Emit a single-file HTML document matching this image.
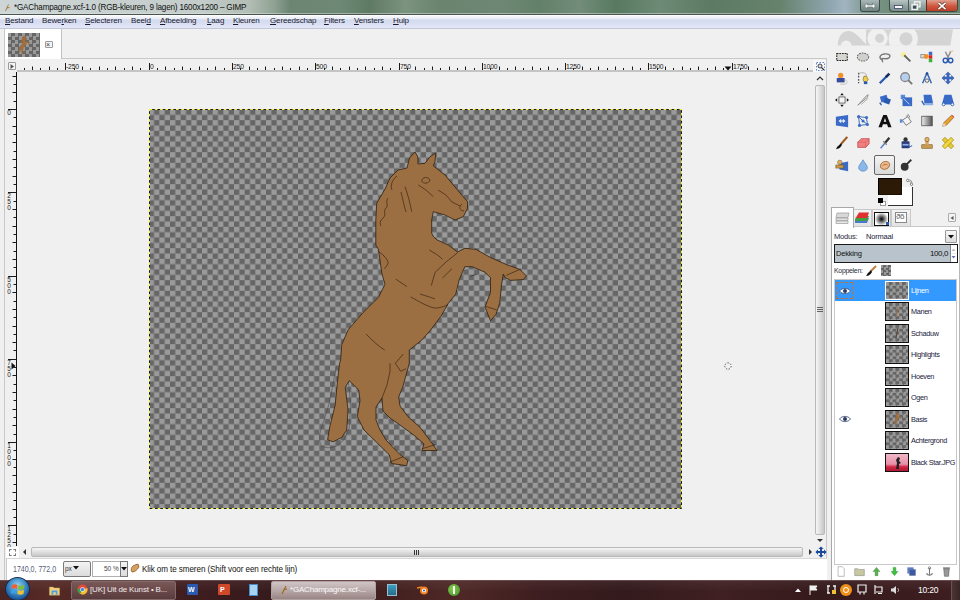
<!DOCTYPE html><html><head><meta charset="utf-8"><style>
*{margin:0;padding:0;box-sizing:border-box}
html,body{width:960px;height:600px;overflow:hidden;background:#f0f0f0;font-family:"Liberation Sans",sans-serif;font-size:8px;color:#000}
.a{position:absolute}
.t{position:absolute;white-space:nowrap;line-height:1}
#title{left:0;top:0;width:960px;height:15px;background:linear-gradient(90deg,#cdd5d6 0.0%,#c4cdca 20.8%,#b2bdb4 26.0%,#8ea192 28.6%,#6c8572 30.2%,#6d8874 35.4%,#5f7a64 38.5%,#7b937f 42.2%,#6a8470 45.8%,#6e8774 52.1%,#63806a 56.2%,#728c79 60.4%,#587a60 64.1%,#6d8a76 68.8%,#5d7a64 74.0%,#66826c 81.2%,#8fa6b0 86.5%,#a0b4c0 88.0%,#7a948a 90.6%,#6d8a72 93.8%,#6a866e 100.0%);border-bottom:1px solid #4a5550;box-shadow:inset 0 -1px 0 rgba(220,230,225,0.5)}
#menu{left:0;top:15px;width:960px;height:14px;background:linear-gradient(#fdfdfe 0,#fdfdfe 8%,#eef1f8 15%,#eef1f8 25%,#d4dbef 38%,#d8def1 60%,#e3e8f8 100%);border-bottom:1px solid #c4c8d6}
#menu .t{top:2px;font-size:8px;color:#1b1b30;letter-spacing:-0.15px}
svg{position:absolute;overflow:visible}
</style></head><body>
<div id="title" class="a">
<svg style="left:4px;top:3px" width="7" height="9" viewBox="0 0 7 9"><path d="M1.5 8 L4.5 1.5 M2.5 5 L5.5 4.5" stroke="#b07a40" stroke-width="1"/></svg>
<div class="t" style="left:14px;top:2.5px;font-size:9px;color:#101010;letter-spacing:-0.2px;transform:scaleX(0.9);transform-origin:0 0">*GAChampagne.xcf-1.0 (RGB-kleuren, 9 lagen) 1600x1200 – GIMP</div>
<div class="a" style="left:860px;top:0;width:20px;height:12px;border:1px solid #3c4a48;border-top:none;border-radius:0 0 3px 3px;background:linear-gradient(#a9b8b8,#8a9c9a 50%,#6f8381)"></div>
<svg style="left:864px;top:2px" width="12" height="8" viewBox="0 0 12 8"><path d="M0.5 4 L3.5 1 V3 H8.5 V1 L11.5 4 L8.5 7 V5 H3.5 V7 Z" fill="#f4f4f4" stroke="#4a5a5a" stroke-width="0.5"/></svg>
<div class="a" style="left:889px;top:0;width:69px;height:12px;border:1px solid #3c4a48;border-top:none;border-radius:0 0 4px 4px;overflow:hidden;background:linear-gradient(#b8c6c4,#93a5a2 50%,#7d908c)"><div class="a" style="left:18px;top:0;width:1px;height:12px;background:#4c5a58"></div><div class="a" style="left:36px;top:0;width:32px;height:12px;border-left:1px solid #5a2a20;background:linear-gradient(#e0a090,#d0573f 50%,#b83a22)"></div></div>
<svg style="left:894px;top:5px" width="10" height="5" viewBox="0 0 10 5"><rect x="0.5" y="0.5" width="8" height="3" fill="#f8f8f8" stroke="#3a4868" stroke-width="0.8"/></svg>
<svg style="left:911px;top:1px" width="10" height="10" viewBox="0 0 10 10"><rect x="3.5" y="0.8" width="5.5" height="5" fill="none" stroke="#f0f0f0" stroke-width="1.4"/><rect x="1" y="3.5" width="5.5" height="5" fill="#8a9e9a" stroke="#f0f0f0" stroke-width="1.4"/><rect x="2" y="5" width="3" height="2.5" fill="#3a4a5a"/></svg>
<svg style="left:937px;top:2px" width="10" height="8" viewBox="0 0 10 8"><path d="M1.5 0.8 L8.5 7.2 M8.5 0.8 L1.5 7.2" stroke="#3a1810" stroke-width="2.8"/><path d="M1.5 0.8 L8.5 7.2 M8.5 0.8 L1.5 7.2" stroke="#fff" stroke-width="1.8"/></svg>
</div>
<div id="menu" class="a">
<span class="t" style="left:5px"><u>B</u>estand</span>
<span class="t" style="left:42px">Bewe<u>r</u>ken</span>
<span class="t" style="left:85px"><u>S</u>electeren</span>
<span class="t" style="left:131px">Beel<u>d</u></span>
<span class="t" style="left:160px"><u>A</u>fbeelding</span>
<span class="t" style="left:207px"><u>L</u>aag</span>
<span class="t" style="left:233px"><u>K</u>leuren</span>
<span class="t" style="left:270px"><u>G</u>ereedschap</span>
<span class="t" style="left:324px"><u>F</u>ilters</span>
<span class="t" style="left:354px"><u>V</u>ensters</span>
<span class="t" style="left:393px"><u>H</u>ulp</span>
</div>
<div class="a" style="left:4px;top:29px;width:1px;height:551px;background:#c8c8c8"></div>
<div class="a" style="left:5px;top:29px;width:57px;height:30px;background:#fff;border-right:1px solid #c0c0c0"></div>
<div class="a" style="left:62px;top:58px;width:765px;height:1px;background:#c8c8c8"></div>
<div class="a" style="left:8px;top:33px;width:32px;height:24px;background-color:#9a9a9a;background-image:repeating-conic-gradient(#666 0 25%,transparent 0 50%);background-size:7px 7px"></div>
<svg style="left:8px;top:33px" width="32" height="24" viewBox="0 0 32 24"><path transform="scale(0.06) translate(-149,-109)" d="M415 152 L417.8 157 L418 164 L425 163.3 L430 156.7 L435.8 153 L435 161.7 L433.3 165.8 L445 175 L453.3 185 L461.7 195 L467.5 201.7 L467.5 208.3 L463.3 216.7 L455 220 L445 215 L433.3 211.7 L431.7 220 L431.7 233.3 L433.7 237 L437.3 240 L448.3 245 L457.5 252 L464.8 248.3 L475.8 249.3 L490.5 257.5 L507 264.8 L519.8 269.4 L526.3 275.8 L523.5 279.5 L510.7 280.4 L505.2 277.7 L503.3 274 L501.5 285 L499.7 303.3 L496 314.3 L490.5 320.8 L485 307 L490.5 292.3 L490.5 277.7 L485 272.2 L472.2 266.7 L464.8 266.7 L459.3 279.5 L455.7 294.2 L448.3 303.3 L441 316.2 L430 330.8 L421.8 340 L409.3 350 L409.3 363.3 L402.7 387.3 L398.7 396.7 L400 406 L408 416.7 L420 427.3 L432.7 444 L437 450.5 L421.8 450.5 L424 444 L415 436 L400 425 L390 418 L383 411 L382 398 L376 407 L376 420 L380 430 L386 440 L400.2 454.8 L407.8 460.3 L406.7 465.7 L391.5 463.5 L389.3 454.8 L364 430 L357.3 416.7 L360 400.7 L358.7 390 L349.3 380.7 L345.3 387.3 L348 410 L346.7 430 L341.7 437.5 L333 441.8 L327.6 439.7 L329.8 426.7 L335.2 405 L337.3 383.3 L339.5 363.8 L340.6 360 L341.7 344.8 L348.2 329.7 L363.3 312.3 L378.5 297.2 L385 284.2 L381.8 273.3 L378.5 249.5 L375.8 245 L375.8 220 L376.7 203.3 L385 189 L390 178 L398 170 L407 168 L409.5 158 Z" fill="#a06e3c"/></svg>
<div class="a" style="left:45px;top:41px;width:8px;height:7px;border:1px solid #9a9a9a;border-radius:1px;background:#f4f4f4"></div>
<div class="t" style="left:46px;top:41px;font-size:7px;color:#333">×</div>
<div class="a" style="left:826px;top:59px;width:1px;height:500px;background:#c8c8c8"></div>
<div class="a" style="left:5px;top:60px;width:808px;height:12px;background:#f0f0f0"></div>
<div class="a" style="left:17px;top:70px;width:796px;height:2px;background:#c4c4c4"></div>
<div class="a" style="left:16px;top:72px;width:1px;height:474px;background:#111"></div>
<div class="a" style="left:8px;top:62px;width:8px;height:8px;border:1px solid #9a9a9a;border-radius:1px;background:#f6f6f6"></div>
<svg style="left:10px;top:64px" width="5" height="5"><path d="M0.5 0 L4 2.5 L0.5 5 Z" fill="#555"/></svg>
<svg style="left:0;top:0" width="960" height="600"><path d="M24.5 68V70 M32.5 66.5V70 M40.5 68V70 M49.5 66.5V70 M57.5 68V70 M65.5 63V70 M74.5 68V70 M82.5 66.5V70 M90.5 68V70 M99.5 66.5V70 M107.5 68V70 M115.5 66.5V70 M124.5 68V70 M132.5 66.5V70 M140.5 68V70 M149.5 63V70 M157.5 68V70 M165.5 66.5V70 M174.5 68V70 M182.5 66.5V70 M190.5 68V70 M199.5 66.5V70 M207.5 68V70 M215.5 66.5V70 M224.5 68V70 M232.5 63V70 M240.5 68V70 M249.5 66.5V70 M257.5 68V70 M265.5 66.5V70 M274.5 68V70 M282.5 66.5V70 M290.5 68V70 M299.5 66.5V70 M307.5 68V70 M315.5 63V70 M324.5 68V70 M332.5 66.5V70 M340.5 68V70 M349.5 66.5V70 M357.5 68V70 M365.5 66.5V70 M374.5 68V70 M382.5 66.5V70 M390.5 68V70 M399.5 63V70 M407.5 68V70 M415.5 66.5V70 M424.5 68V70 M432.5 66.5V70 M440.5 68V70 M449.5 66.5V70 M457.5 68V70 M465.5 66.5V70 M474.5 68V70 M482.5 63V70 M490.5 68V70 M499.5 66.5V70 M507.5 68V70 M515.5 66.5V70 M523.5 68V70 M532.5 66.5V70 M540.5 68V70 M548.5 66.5V70 M557.5 68V70 M565.5 63V70 M573.5 68V70 M582.5 66.5V70 M590.5 68V70 M598.5 66.5V70 M607.5 68V70 M615.5 66.5V70 M623.5 68V70 M632.5 66.5V70 M640.5 68V70 M648.5 63V70 M657.5 68V70 M665.5 66.5V70 M673.5 68V70 M682.5 66.5V70 M690.5 68V70 M698.5 66.5V70 M707.5 68V70 M715.5 66.5V70 M723.5 68V70 M732.5 63V70 M740.5 68V70 M748.5 66.5V70 M757.5 68V70 M765.5 66.5V70 M773.5 68V70 M782.5 66.5V70 M790.5 68V70 M798.5 66.5V70 M807.5 68V70" stroke="#1a1a1a" stroke-width="1"/></svg>
<div class="t" style="left:66px;top:63.5px;font-size:6.8px;color:#222;letter-spacing:-0.2px">-250</div>
<div class="t" style="left:150px;top:63.5px;font-size:6.8px;color:#222;letter-spacing:-0.2px">0</div>
<div class="t" style="left:233px;top:63.5px;font-size:6.8px;color:#222;letter-spacing:-0.2px">250</div>
<div class="t" style="left:316px;top:63.5px;font-size:6.8px;color:#222;letter-spacing:-0.2px">500</div>
<div class="t" style="left:400px;top:63.5px;font-size:6.8px;color:#222;letter-spacing:-0.2px">750</div>
<div class="t" style="left:483px;top:63.5px;font-size:6.8px;color:#222;letter-spacing:-0.2px">1000</div>
<div class="t" style="left:566px;top:63.5px;font-size:6.8px;color:#222;letter-spacing:-0.2px">1250</div>
<div class="t" style="left:649px;top:63.5px;font-size:6.8px;color:#222;letter-spacing:-0.2px">1500</div>
<div class="t" style="left:733px;top:63.5px;font-size:6.8px;color:#222;letter-spacing:-0.2px">1750</div>
<svg style="left:0;top:0" width="960" height="600"><path d="M12.5 76.5H16 M13.5 84.5H16 M12.5 92.5H16 M13.5 101.5H16 M8 109.5H16 M13.5 117.5H16 M12.5 126.5H16 M13.5 134.5H16 M12.5 142.5H16 M13.5 151.5H16 M12.5 159.5H16 M13.5 167.5H16 M12.5 176.5H16 M13.5 184.5H16 M8 192.5H16 M13.5 201.5H16 M12.5 209.5H16 M13.5 217.5H16 M12.5 226.5H16 M13.5 234.5H16 M12.5 242.5H16 M13.5 251.5H16 M12.5 259.5H16 M13.5 267.5H16 M8 276.5H16 M13.5 284.5H16 M12.5 292.5H16 M13.5 301.5H16 M12.5 309.5H16 M13.5 317.5H16 M12.5 326.5H16 M13.5 334.5H16 M12.5 342.5H16 M13.5 350.5H16 M8 359.5H16 M13.5 367.5H16 M12.5 375.5H16 M13.5 384.5H16 M12.5 392.5H16 M13.5 400.5H16 M12.5 409.5H16 M13.5 417.5H16 M12.5 425.5H16 M13.5 434.5H16 M8 442.5H16 M13.5 450.5H16 M12.5 459.5H16 M13.5 467.5H16 M12.5 475.5H16 M13.5 484.5H16 M12.5 492.5H16 M13.5 500.5H16 M12.5 509.5H16 M13.5 517.5H16 M8 525.5H16 M13.5 534.5H16 M12.5 542.5H16" stroke="#1a1a1a" stroke-width="1"/></svg>
<div class="a" style="left:6px;top:110px;width:6px;font-size:6.5px;line-height:6px;color:#222;text-align:center">0</div>
<div class="a" style="left:6px;top:193px;width:6px;font-size:6.5px;line-height:6px;color:#222;text-align:center">2<br>5<br>0</div>
<div class="a" style="left:6px;top:277px;width:6px;font-size:6.5px;line-height:6px;color:#222;text-align:center">5<br>0<br>0</div>
<div class="a" style="left:6px;top:360px;width:6px;font-size:6.5px;line-height:6px;color:#222;text-align:center">7<br>5<br>0</div>
<div class="a" style="left:6px;top:443px;width:6px;font-size:6.5px;line-height:6px;color:#222;text-align:center">1<br>0<br>0<br>0</div>
<div class="a" style="left:6px;top:526px;width:6px;font-size:6.5px;line-height:6px;color:#222;text-align:center">1<br>2<br>5<br>0</div>
<svg style="left:724px;top:66px" width="8" height="5"><path d="M0.5 0.5 H7.5 L4 4.5 Z" fill="#111"/></svg>
<svg style="left:11px;top:362px" width="5" height="8"><path d="M0.5 0.5 V7.5 L4.5 4 Z" fill="#111"/></svg>
<svg style="left:149px;top:109px" width="533" height="400" viewBox="0 0 533 400"><defs><pattern id="ck" x="-0.33" y="0.5" width="10.666667" height="10.666667" patternUnits="userSpaceOnUse"><rect width="10.666667" height="10.666667" fill="#9a9a9a"/><rect x="5.333333" width="5.333333" height="5.333333" fill="#666"/><rect y="5.333333" width="5.333333" height="5.333333" fill="#666"/></pattern></defs><rect width="533" height="400" fill="url(#ck)"/></svg>
<svg style="left:149px;top:109px" width="534" height="401" viewBox="0 0 534 401"><rect x="0.5" y="0.5" width="532" height="399" fill="none" stroke="#f4f040" stroke-width="1"/><rect x="0.5" y="0.5" width="532" height="399" fill="none" stroke="#181818" stroke-width="1" stroke-dasharray="2.65 2.65" stroke-dashoffset="-2.65"/></svg>
<svg style="left:0;top:0" width="960" height="600"><path d="M336.3 366 C333 385 330 400 328.7 405 C325 418 321 428 320 433.3 C319 440 320 445 322.2 446.2 C326 448 330 448 333 447.3 C338 446 341 443 343.8 439.7 C347 434 349 430 349.3 426.7 C350 418 350.5 410 350.3 405 C350 395 349 386 348.2 381.2" fill="none" stroke="#4a4a4a" stroke-width="0.6"/><path d="M415 152 L417.8 157 L418 164 L425 163.3 L430 156.7 L435.8 153 L435 161.7 L433.3 165.8 L445 175 L453.3 185 L461.7 195 L467.5 201.7 L467.5 208.3 L463.3 216.7 L455 220 L445 215 L433.3 211.7 L431.7 220 L431.7 233.3 L433.7 237 L437.3 240 L448.3 245 L457.5 252 L464.8 248.3 L475.8 249.3 L490.5 257.5 L507 264.8 L519.8 269.4 L526.3 275.8 L523.5 279.5 L510.7 280.4 L505.2 277.7 L503.3 274 L501.5 285 L499.7 303.3 L496 314.3 L490.5 320.8 L485 307 L490.5 292.3 L490.5 277.7 L485 272.2 L472.2 266.7 L464.8 266.7 L459.3 279.5 L455.7 294.2 L448.3 303.3 L441 316.2 L430 330.8 L421.8 340 L409.3 350 L409.3 363.3 L402.7 387.3 L398.7 396.7 L400 406 L408 416.7 L420 427.3 L432.7 444 L437 450.5 L421.8 450.5 L424 444 L415 436 L400 425 L390 418 L383 411 L382 398 L376 407 L376 420 L380 430 L386 440 L400.2 454.8 L407.8 460.3 L406.7 465.7 L391.5 463.5 L389.3 454.8 L364 430 L357.3 416.7 L360 400.7 L358.7 390 L349.3 380.7 L345.3 387.3 L348 410 L346.7 430 L341.7 437.5 L333 441.8 L327.6 439.7 L329.8 426.7 L335.2 405 L337.3 383.3 L339.5 363.8 L340.6 360 L341.7 344.8 L348.2 329.7 L363.3 312.3 L378.5 297.2 L385 284.2 L381.8 273.3 L378.5 249.5 L375.8 245 L375.8 220 L376.7 203.3 L385 189 L390 178 L398 170 L407 168 L409.5 158 Z" fill="#9c6f43" stroke="#2a1a08" stroke-width="0.75" stroke-linejoin="round"/><path d="M421.7 181 C422 177 428 176 430 180 C429 184 423 184 421.7 181 Z M418.3 185 L426 190 L433.3 196.7 M438 190 L446 195 L452 202 L460 206 M462 204 C458 207 460 211 464 211 M405 186.7 C408 195 410 203 411.7 211.7 M401 192 C403 200 404 206 406 212 M397 176 C392 180 390 186 392 190 M388 198 C385 202 389 206 386 208 C383 211 386 214 384 217 C381 220 379 222 381 226 M429.4 250 C434 253 440 256 442.5 259.4 M431.3 285.6 L435 272.5 L446 262 L457.5 252.8 M395.6 279 L406.9 286.6 M410.6 296.9 C418 301 428 307 435 308.1 C440 308 446 306 448.1 304.4 M420 294 L435 298.8 M442.5 278 L451.9 268.8 M470.6 276.3 L476.3 274.4 M506.3 275.3 L521.3 268.8 M485.6 306.3 L496.9 310 M378.8 251.9 C384 255 388 260 388.1 263.1 C387 266 385 268 384.4 268.8 M366 334 C372 340 378 346 384.7 350 M390 363.3 L390 371.3 L387 385 L382 398 M403.3 354 L395.3 363.3 L400.7 371.3 L406 368.7 M390 462 L403.3 456.7 M422 448.7 L435.3 444.7 " fill="none" stroke="#2a1a08" stroke-width="0.6"/></svg>
<svg style="left:723px;top:361px" width="10" height="10" viewBox="0 0 10 10"><circle cx="5" cy="5" r="3.2" fill="none" stroke="#fff" stroke-width="1.6"/><circle cx="5" cy="5" r="3.2" fill="none" stroke="#333" stroke-width="0.9" stroke-dasharray="1.6 1.2"/></svg>
<div class="a" style="left:815px;top:60px;width:10px;height:486px;background:#f0f0f0"></div>
<div class="a" style="left:815px;top:85px;width:10px;height:450px;border:1px solid #b8b8b8;border-radius:2px;background:linear-gradient(90deg,#f6f6f6,#dadada 60%,#c6c6c8)"></div>
<svg style="left:817px;top:76px" width="6" height="5"><path d="M0 4 L3 1 L6 4" fill="none" stroke="#333" stroke-width="1.2"/></svg>
<svg style="left:817px;top:538px" width="6" height="5"><path d="M0 1 L6 1 L3 4 Z" fill="#333"/></svg>
<div class="a" style="left:813px;top:60px;width:13px;height:12px;background:#f8f8f8"></div>
<svg style="left:816px;top:62px" width="9" height="9" viewBox="0 0 9 9"><rect x="0.5" y="0.5" width="8" height="8" fill="none" stroke="#3a6ad0" stroke-width="0.8" stroke-dasharray="1.5 1.5"/><circle cx="4" cy="4" r="2" fill="#ddd" stroke="#333" stroke-width="0.9"/><path d="M5.5 5.5 L8 8" stroke="#333" stroke-width="1.2"/></svg>
<div class="a" style="left:6px;top:547px;width:13px;height:11px;background:#fff"></div>
<div class="a" style="left:9px;top:549px;width:7px;height:7px;border:1px dashed #777"></div>
<div class="a" style="left:31px;top:547px;width:772px;height:10px;border:1px solid #b8b8b8;border-radius:2px;background:linear-gradient(#f6f6f6,#dadada 60%,#c6c6c8)"></div>
<svg style="left:22px;top:549px" width="5" height="6"><path d="M4 0 L1 3 L4 6 Z" fill="#333"/></svg>
<svg style="left:808px;top:549px" width="5" height="6"><path d="M1 0 L4 3 L1 6 Z" fill="#333"/></svg>
<svg style="left:815px;top:546px" width="12" height="12" viewBox="0 0 16 16"><path d="M8 0.5 L11.5 4 H9.3 V6.7 H12 V4.5 L15.5 8 L12 11.5 V9.3 H9.3 V12 H11.5 L8 15.5 L4.5 12 H6.7 V9.3 H4 V11.5 L0.5 8 L4 4.5 V6.7 H6.7 V4 H4.5 Z" fill="#1a4a9a"/></svg>
<svg style="left:816px;top:306px" width="8" height="7"><path d="M1 1.5 H7 M1 3.5 H7 M1 5.5 H7" stroke="#555" stroke-width="0.9"/></svg>
<svg style="left:412px;top:549px" width="9" height="7"><path d="M2.5 1 V6 M4.5 1 V6 M6.5 1 V6" stroke="#333" stroke-width="1"/></svg>
<div class="a" style="left:6px;top:558px;width:821px;height:22px;background:#fff;border-top:1px solid #d8d8d8;border-left:1px solid #c8c8c8"></div>
<div class="t" style="left:13px;top:564.5px;font-size:8.8px;color:#55607a;transform:scaleX(0.8);transform-origin:0 0">1740,0, 772,0</div>
<div class="a" style="left:63px;top:561px;width:28px;height:16px;border:1px solid #7a7a7a;border-radius:2px;background:linear-gradient(#f4f4f4,#dcdcdc)"></div>
<div class="t" style="left:65px;top:566px;font-size:6.5px;color:#333">px</div>
<svg style="left:73px;top:566px" width="6" height="4"><path d="M0 0 H6 L3 3.5 Z" fill="#111"/></svg>
<div class="a" style="left:92px;top:561px;width:29px;height:16px;border:1px solid #b0b0b0;background:#fff"></div>
<div class="t" style="left:104px;top:566px;font-size:6.5px;color:#444">50 %</div>
<div class="a" style="left:120px;top:561px;width:8px;height:16px;border:1px solid #7a7a7a;background:linear-gradient(#f4f4f4,#dcdcdc)"></div>
<svg style="left:121px;top:567px" width="6" height="4"><path d="M0 0 H6 L3 3.5 Z" fill="#111"/></svg>
<svg style="left:130px;top:563px" width="10" height="10" viewBox="0 0 10 10"><path d="M2 9 C0 6 2 3 5 2 L8 1 L9 4 C7 7 5 9 2 9 Z" fill="#d8a060" stroke="#8a5a20" stroke-width="0.8"/></svg>
<div class="t" style="left:142px;top:564.5px;font-size:9px;color:#111;letter-spacing:-0.1px;transform:scaleX(0.9);transform-origin:0 0">Klik om te smeren (Shift voor een rechte lijn)</div>
<svg style="left:828px;top:26px" width="132" height="24" viewBox="828 26 132 24"><defs><clipPath id="wb"><rect x="828" y="29.2" width="132" height="16.5"/></clipPath></defs><g clip-path="url(#wb)"><path d="M837.8 45.7 C837.8 37 842 31 848.5 31 C854 31 858 36 866 44 L866 29.2 L953 29.2 L950.3 45.7 Z" fill="#d4d4d4"/><circle cx="846.2" cy="46.2" r="5.6" fill="#f0f0f0"/><circle cx="877.6" cy="38.3" r="10.2" fill="#f0f0f0"/><circle cx="879.6" cy="38.2" r="4.5" fill="#d4d4d4"/><circle cx="903.2" cy="39" r="14.6" fill="#f0f0f0"/><circle cx="906" cy="38.8" r="6.6" fill="#d4d4d4"/></g></svg>
<div class="a" style="left:874px;top:155px;width:21px;height:20px;border:1px solid #666;border-radius:2px;background:linear-gradient(#f4f4f4,#d8d8d8)"></div>
<svg style="left:835.2px;top:49.5px" width="14" height="14" viewBox="0 0 16 16"><rect x="2" y="4" width="12" height="8" fill="#d6d6d0" stroke="#222" stroke-width="1.2" stroke-dasharray="2 1"/></svg>
<svg style="left:856.4px;top:49.5px" width="14" height="14" viewBox="0 0 16 16"><ellipse cx="8" cy="8" rx="6.5" ry="4.5" fill="#d0d0cc" stroke="#666" stroke-width="1.2" stroke-dasharray="2 1"/></svg>
<svg style="left:877.6px;top:49.5px" width="14" height="14" viewBox="0 0 16 16"><path d="M4 11 C1 9 2 5 7 4.5 C12 4 15 6 13 8.5 C11 10.5 7 10 5 9.5 M5 9.5 C4 12 6 13 5 14" fill="none" stroke="#777" stroke-width="1.6"/></svg>
<svg style="left:898.8px;top:49.5px" width="14" height="14" viewBox="0 0 16 16"><circle cx="5" cy="5" r="3" fill="#f8f0a0"/><path d="M6 6 L13 13" stroke="#666" stroke-width="2.2"/></svg>
<svg style="left:920.0px;top:49.5px" width="14" height="14" viewBox="0 0 16 16"><rect x="10" y="2" width="4" height="4" fill="#3a6ac8"/><rect x="10" y="6" width="4" height="4" fill="#e02020"/><rect x="10" y="10" width="4" height="4" fill="#40b040"/><rect x="1" y="5" width="4" height="4" fill="#ddd" stroke="#777" stroke-width="0.8"/><circle cx="7" cy="7.5" r="2.8" fill="#f0902a"/></svg>
<svg style="left:941.2px;top:49.5px" width="14" height="14" viewBox="0 0 16 16"><path d="M5 2 L9 10 M11 2 L7 10" stroke="#888" stroke-width="1.6"/><circle cx="5" cy="12" r="2.5" fill="none" stroke="#2a5ab0" stroke-width="1.6"/><circle cx="11" cy="12" r="2.5" fill="none" stroke="#2a5ab0" stroke-width="1.6"/><path d="M9 2 L14 1" stroke="#e0b080" stroke-width="1"/></svg>
<svg style="left:835.2px;top:71.2px" width="14" height="14" viewBox="0 0 16 16"><path d="M2 13 L2 8 L11 8 L11 13 Z" fill="#3a4a9a"/><path d="M11 10 C14 10 15 14 12 15 L6 15" fill="none" stroke="#bbb" stroke-width="1"/><circle cx="6.5" cy="5" r="3" fill="#f0902a"/></svg>
<svg style="left:856.4px;top:71.2px" width="14" height="14" viewBox="0 0 16 16"><path d="M3 2 V14" stroke="#555" stroke-width="1.5" stroke-dasharray="2 1.5"/><path d="M3 3 C8 1 12 2 12 6" fill="none" stroke="#999" stroke-width="0.8"/><path d="M9 6 L12 6 L14 10 L12 12 L9 12 L8 10 Z" fill="#f0d040" stroke="#6a5010" stroke-width="0.6"/><rect x="9" y="12" width="4" height="3" fill="#2a5ab0"/></svg>
<svg style="left:877.6px;top:71.2px" width="14" height="14" viewBox="0 0 16 16"><path d="M2 14 L10 6" stroke="#2a5ab0" stroke-width="2.6"/><path d="M9 7 L13 3" stroke="#1a2a5a" stroke-width="3"/></svg>
<svg style="left:898.8px;top:71.2px" width="14" height="14" viewBox="0 0 16 16"><circle cx="7" cy="7" r="5" fill="#b8d0f0" stroke="#888" stroke-width="1.5"/><path d="M10.5 10.5 L15 15" stroke="#777" stroke-width="2.2"/></svg>
<svg style="left:920.0px;top:71.2px" width="14" height="14" viewBox="0 0 16 16"><path d="M8 2 L3 14 M8 2 L13 14" stroke="#3a6ac0" stroke-width="1.8"/><circle cx="8" cy="3" r="1.5" fill="#2a4a90"/><circle cx="8" cy="11" r="2" fill="none" stroke="#555" stroke-width="1"/></svg>
<svg style="left:941.2px;top:71.2px" width="14" height="14" viewBox="0 0 16 16"><path d="M8 1 L11 4 H9.2 V6.8 H12 V5 L15 8 L12 11 V9.2 H9.2 V12 H11 L8 15 L5 12 H6.8 V9.2 H4 V11 L1 8 L4 5 V6.8 H6.8 V4 H5 Z" fill="#3a6ac8" stroke="#2a4a90" stroke-width="0.5"/></svg>
<svg style="left:835.2px;top:92.8px" width="14" height="14" viewBox="0 0 16 16"><rect x="4.5" y="4.5" width="7" height="7" fill="#f4f4f4" stroke="#333" stroke-width="0.8"/><path d="M8 0 L6 2.5 H10 Z M8 16 L6 13.5 H10 Z M0 8 L2.5 6 V10 Z M16 8 L13.5 6 V10 Z" fill="#111"/></svg>
<svg style="left:856.4px;top:92.8px" width="14" height="14" viewBox="0 0 16 16"><path d="M2 14 L12 3 L14 2 L13 5 Z" fill="#ddd" stroke="#777" stroke-width="0.8"/><path d="M6 13 L14 6" stroke="#999" stroke-width="0.8"/></svg>
<svg style="left:877.6px;top:92.8px" width="14" height="14" viewBox="0 0 16 16"><rect x="3" y="3" width="8" height="7" fill="#3a6ac8" transform="rotate(-15 7 7)"/><rect x="7" y="6" width="7" height="6" fill="#2a5ab0" transform="rotate(20 10 9)"/><path d="M2 11 L4 14" stroke="#2a5ab0" stroke-width="1.5"/></svg>
<svg style="left:898.8px;top:92.8px" width="14" height="14" viewBox="0 0 16 16"><rect x="2" y="2" width="5" height="5" fill="#5a8ad8"/><rect x="4" y="5" width="11" height="10" fill="#3a6ac8"/><path d="M5 6 L12 13" stroke="#fff" stroke-width="0.8"/></svg>
<svg style="left:920.0px;top:92.8px" width="14" height="14" viewBox="0 0 16 16"><path d="M4 2 L13 2 L15 12 L5 12 Z" fill="#3a6ac8"/><path d="M2 9 L5 14" stroke="#2a5ab0" stroke-width="1.5"/><rect x="6" y="12" width="9" height="2" fill="#8ab0e8"/></svg>
<svg style="left:941.2px;top:92.8px" width="14" height="14" viewBox="0 0 16 16"><path d="M4 2 L12 2 L15 13 L1 13 Z" fill="#3a6ac8"/><circle cx="3" cy="13" r="1.6" fill="#fff" stroke="#2a5ab0"/><circle cx="13" cy="13" r="1.6" fill="#fff" stroke="#2a5ab0"/></svg>
<svg style="left:835.2px;top:114.4px" width="14" height="14" viewBox="0 0 16 16"><path d="M1 3 L15 1 V15 L1 13 Z" fill="#3a6ac8"/><path d="M4 8 L7 5.5 V10.5 Z M12 8 L9 5.5 V10.5 Z" fill="#e8f0ff"/><path d="M7 8 H9" stroke="#e8f0ff" stroke-width="1.5"/></svg>
<svg style="left:856.4px;top:114.4px" width="14" height="14" viewBox="0 0 16 16"><path d="M3 3 L12 4 L13 12 L4 13 Z M3 3 L8 8 L13 12" fill="none" stroke="#2a5ab0" stroke-width="1"/><circle cx="3" cy="3" r="1.8" fill="#3a6ac8"/><circle cx="12" cy="4" r="1.8" fill="#3a6ac8"/><circle cx="13" cy="12" r="1.8" fill="#3a6ac8"/><circle cx="4" cy="13" r="1.8" fill="#3a6ac8"/><circle cx="8" cy="8" r="1.8" fill="#3a6ac8"/></svg>
<svg style="left:877.6px;top:114.4px" width="14" height="14" viewBox="0 0 16 16"><path d="M0.5 15 L6 1 H10 L15.5 15 H11.5 L10.4 11.8 H5.6 L4.5 15 Z M6.6 8.8 H9.4 L8 4.6 Z" fill="#111"/></svg>
<svg style="left:898.8px;top:114.4px" width="14" height="14" viewBox="0 0 16 16"><path d="M4 7 L10 3 L14 9 L8 13 Z" fill="#f4f4f4" stroke="#555" stroke-width="0.8"/><path d="M9 3 C9 0 12 0 12 4" fill="none" stroke="#555" stroke-width="0.8"/><rect x="1" y="6" width="3" height="4" fill="#5a8ad8"/></svg>
<svg style="left:920.0px;top:114.4px" width="14" height="14" viewBox="0 0 16 16"><defs><linearGradient id="bg1"><stop offset="0" stop-color="#eee"/><stop offset="1" stop-color="#555"/></linearGradient></defs><rect x="2" y="2.5" width="12" height="11" fill="url(#bg1)" stroke="#444" stroke-width="0.8"/></svg>
<svg style="left:941.2px;top:114.4px" width="14" height="14" viewBox="0 0 16 16"><path d="M2 14 L3 10 L12 1.5 L14.5 4 L6 13 Z" fill="#e8a030" stroke="#6a4010" stroke-width="0.6"/><path d="M12 1.5 L14.5 4 L15 3 L13 1 Z" fill="#e04040"/><path d="M2 14 L3 10 L6 13 Z" fill="#f0d8b0"/></svg>
<svg style="left:835.2px;top:136.1px" width="14" height="14" viewBox="0 0 16 16"><path d="M14 1 L7 9" stroke="#a05a20" stroke-width="2.6"/><path d="M7 8 L4 11 C2 12 2 14 1 15 C4 15 7 13 8 10 Z" fill="#111"/></svg>
<svg style="left:856.4px;top:136.1px" width="14" height="14" viewBox="0 0 16 16"><path d="M2 7 L6 3 H15 V9 L11 13 H2 Z" fill="#f08080" stroke="#c04040" stroke-width="0.8"/><path d="M2 7 H11 V13 M11 7 L15 3" fill="none" stroke="#d05050" stroke-width="0.6"/></svg>
<svg style="left:877.6px;top:136.1px" width="14" height="14" viewBox="0 0 16 16"><path d="M13 2 L8 8" stroke="#333" stroke-width="2.6"/><path d="M8 8 L3 14" stroke="#4a7ac8" stroke-width="1.5"/><path d="M6 6 L10 10" stroke="#777" stroke-width="1.5"/></svg>
<svg style="left:898.8px;top:136.1px" width="14" height="14" viewBox="0 0 16 16"><rect x="3" y="6" width="9" height="8" rx="1" fill="#2a3a7a"/><circle cx="7.5" cy="4" r="2.5" fill="#333"/><rect x="4" y="9" width="7" height="2" fill="#8ab0e8"/><path d="M11 13 L15 11" stroke="#2a5ab0" stroke-width="1.2"/></svg>
<svg style="left:920.0px;top:136.1px" width="14" height="14" viewBox="0 0 16 16"><rect x="2" y="10" width="12" height="4" fill="#c89a50" stroke="#6a4a10" stroke-width="0.6"/><rect x="6" y="5" width="4" height="5" fill="#d8a860"/><circle cx="8" cy="4" r="2.5" fill="#e0b070" stroke="#6a4a10" stroke-width="0.6"/></svg>
<svg style="left:941.2px;top:136.1px" width="14" height="14" viewBox="0 0 16 16"><path d="M1.5 4.5 L4.5 1.5 L14.5 11.5 L11.5 14.5 Z" fill="#e8cc30" stroke="#a08010" stroke-width="0.8"/><path d="M14.5 4.5 L11.5 1.5 L1.5 11.5 L4.5 14.5 Z" fill="#f0d840" stroke="#a08010" stroke-width="0.8"/></svg>
<svg style="left:835.2px;top:157.8px" width="14" height="14" viewBox="0 0 16 16"><path d="M5 6 L15 4 V15 L5 13 Z" fill="#3a6ac8"/><rect x="1" y="8" width="9" height="3.5" fill="#c89a50" stroke="#6a4a10" stroke-width="0.6"/><circle cx="5.5" cy="5" r="2.5" fill="#e0b070" stroke="#6a4a10" stroke-width="0.6"/></svg>
<svg style="left:856.4px;top:157.8px" width="14" height="14" viewBox="0 0 16 16"><path d="M8 2 C10 6 13 8 13 11 C13 14 10 15 8 15 C6 15 3 14 3 11 C3 8 6 6 8 2 Z" fill="#8ab8e8" stroke="#5a88c0" stroke-width="0.8"/></svg>
<svg style="left:877.6px;top:157.8px" width="14" height="14" viewBox="0 0 16 16"><path d="M3 11 C2 7 5 4 9 4 C12 4 14 6 13 9 C12 12 9 13 6 13 Z" fill="#e8b890" stroke="#a06020" stroke-width="1"/><path d="M5 9 C7 7 9 7 11 8" fill="none" stroke="#a06020" stroke-width="0.8"/></svg>
<svg style="left:898.8px;top:157.8px" width="14" height="14" viewBox="0 0 16 16"><circle cx="6.5" cy="10" r="4.5" fill="#333"/><path d="M9 7 L14 2" stroke="#333" stroke-width="2.2"/></svg>
<div class="a" style="left:888px;top:187px;width:25px;height:19px;background:#fff;border-right:1.5px solid #333;border-bottom:1.5px solid #333"></div>
<div class="a" style="left:878px;top:178px;width:24px;height:17px;background:#2c1a06;border-left:1px solid #000;border-top:1px solid #000;border-right:1px solid #1a1004;border-bottom:1px solid #1a1004"></div>
<svg style="left:905px;top:178px" width="9" height="9" viewBox="0 0 9 9"><path d="M1 2.5 L3 0.8 L3 1.8 C6 1.8 7 3 7 6 L8 6 L6.5 8 L5 6 L6 6 C6 4 5 3 3 3 L3 4 Z" fill="#fff" stroke="#555" stroke-width="0.6"/></svg>
<div class="a" style="left:880px;top:201px;width:6px;height:5px;background:#fff;border:1px solid #999"></div>
<div class="a" style="left:878px;top:198px;width:5px;height:5px;background:#000"></div>
<div class="a" style="left:831px;top:226px;width:129px;height:354px;background:#fff;border-left:1px solid #a8a8a8;border-top:1px solid #c8c8c8;border-right:1px solid #b8b8b8"></div>
<div class="a" style="left:853px;top:209px;width:19px;height:17px;border:1px solid #c8c8c8;border-bottom:none;background:linear-gradient(#f4f4f4,#e2e2e2)"></div>
<div class="a" style="left:872px;top:209px;width:19px;height:17px;border:1px solid #c8c8c8;border-bottom:none;background:linear-gradient(#f4f4f4,#e2e2e2)"></div>
<div class="a" style="left:891px;top:209px;width:20px;height:17px;border:1px solid #c8c8c8;border-bottom:none;background:linear-gradient(#f4f4f4,#e2e2e2)"></div>
<div class="a" style="left:831px;top:207px;width:23px;height:21px;border:1px solid #a8a8a8;border-bottom:none;background:#fff"></div>
<svg style="left:834px;top:211px" width="16" height="14" viewBox="0 0 16 14"><path d="M2 10 H14 V12.5 H2 Z" fill="#e8e8e8" stroke="#999" stroke-width="0.7"/><path d="M2 7 H14 V9.5 H2 Z" fill="#e0e0e0" stroke="#999" stroke-width="0.7"/><path d="M3 2 H15 L14 6.5 H2 Z" fill="#d8d8d8" stroke="#999" stroke-width="0.7"/></svg>
<svg style="left:854px;top:211px" width="16" height="14" viewBox="0 0 16 14"><path d="M1 10 L4 7 H15 L13 12 H1 Z" fill="#4a7ad0"/><path d="M1 8 L4 5 H15 L13 10 H1 Z" fill="#40a040"/><path d="M2 6.5 L5 1.5 H15 L13 7 H1 Z" fill="#e03030"/></svg>
<div class="a" style="left:874px;top:212px;width:15px;height:14px;border:1px solid #111;background:radial-gradient(circle,#000 0,#333 15%,#999 45%,#fff 75%)"></div>
<div class="a" style="left:886px;top:222px;width:3px;height:3px;background:#2a5ab0"></div>
<div class="a" style="left:895px;top:212px;width:12px;height:11px;border:1px solid #888;background:#fff"></div>
<div class="t" style="left:896px;top:213px;font-size:8px;color:#555;letter-spacing:-0.5px">ϑõ</div>
<div class="a" style="left:948px;top:213px;width:8px;height:9px;border:1px solid #aaa;border-radius:1px;background:#f4f4f4"></div>
<svg style="left:950px;top:215.5px" width="4" height="4"><path d="M3.5 0 L0.5 2 L3.5 4 Z" fill="#555"/></svg>
<div class="t" style="left:834px;top:233px;font-size:7.5px;color:#2a2a3a;letter-spacing:-0.2px">Modus:</div>
<div class="t" style="left:866px;top:233px;font-size:7.5px;color:#1a1a3a;letter-spacing:-0.2px">Normaal</div>
<div class="a" style="left:945px;top:230px;width:12px;height:13px;border:1px solid #999;border-radius:1px;background:linear-gradient(#f8f8f8,#dcdcdc)"></div>
<svg style="left:948px;top:235px" width="6" height="4"><path d="M0 0 H6 L3 3.5 Z" fill="#111"/></svg>
<div class="a" style="left:834px;top:244px;width:124px;height:19px;border:1px solid #1a1a1a;background:#b8c3cb"></div>
<div class="a" style="left:950px;top:245px;width:7px;height:17px;background:#fff;border-left:1px solid #888"></div>
<svg style="left:951px;top:247px" width="5" height="13"><path d="M0.5 4 L2.5 1.5 L4.5 4 Z" fill="#bbb"/><path d="M0.5 9 L2.5 11.5 L4.5 9 Z" fill="#5a70b0"/><path d="M0 6.5 H5" stroke="#ddd" stroke-width="0.6"/></svg>
<div class="t" style="left:836px;top:250px;font-size:7.5px;color:#111;letter-spacing:-0.2px">Dekking</div>
<div class="t" style="left:930px;top:249.5px;font-size:8px;color:#111;letter-spacing:-0.4px">100,0</div>
<div class="t" style="left:834px;top:267px;font-size:7.5px;color:#2a2a3a;letter-spacing:-0.3px;transform:scaleX(0.92);transform-origin:0 0">Koppelen:</div>
<svg style="left:866px;top:265px" width="11" height="11" viewBox="0 0 11 11"><path d="M10 1 L5 6" stroke="#c08040" stroke-width="2"/><path d="M5 5 L2 8 C1 9 1 10 0 11 C3 11 5 9 6 7 Z" fill="#111"/></svg>
<div class="a" style="left:881px;top:265px;width:10px;height:11px;background-color:#9a9a9a;background-image:repeating-conic-gradient(#666 0 25%,transparent 0 50%);background-size:5px 5px"></div>
<div class="a" style="left:834px;top:279px;width:123px;height:286px;background:#fff;border:1px solid #c8c8c8"></div>
<div class="a" style="left:835px;top:280px;width:121px;height:20.5px;background:#3399ff"></div>
<div class="a" style="left:836px;top:282px;width:17px;height:17px;border:1px dashed #c07030"></div>
<div class="a" style="left:885px;top:281.0px;width:24px;height:19px;border:1.5px solid #fff;background-color:#9a9a9a;background-image:repeating-conic-gradient(#666 0 25%,transparent 0 50%);background-size:6.6px 6.6px"></div>
<div class="t" style="left:911px;top:287.0px;font-size:7.3px;color:#fff;letter-spacing:-0.35px">Lijnen</div>
<div class="a" style="left:885px;top:302.4px;width:24px;height:19px;border:1.5px solid #111;background-color:#9a9a9a;background-image:repeating-conic-gradient(#666 0 25%,transparent 0 50%);background-size:6.6px 6.6px"></div>
<div class="t" style="left:911px;top:308.4px;font-size:7.3px;color:#1a1a3a;letter-spacing:-0.35px">Manen</div>
<div class="a" style="left:885px;top:323.9px;width:24px;height:19px;border:1.5px solid #111;background-color:#9a9a9a;background-image:repeating-conic-gradient(#666 0 25%,transparent 0 50%);background-size:6.6px 6.6px"></div>
<div class="t" style="left:911px;top:329.9px;font-size:7.3px;color:#1a1a3a;letter-spacing:-0.35px">Schaduw</div>
<div class="a" style="left:885px;top:345.4px;width:24px;height:19px;border:1.5px solid #111;background-color:#9a9a9a;background-image:repeating-conic-gradient(#666 0 25%,transparent 0 50%);background-size:6.6px 6.6px"></div>
<div class="t" style="left:911px;top:351.4px;font-size:7.3px;color:#1a1a3a;letter-spacing:-0.35px">Highlights</div>
<div class="a" style="left:885px;top:366.8px;width:24px;height:19px;border:1.5px solid #111;background-color:#9a9a9a;background-image:repeating-conic-gradient(#666 0 25%,transparent 0 50%);background-size:6.6px 6.6px"></div>
<div class="t" style="left:911px;top:372.8px;font-size:7.3px;color:#1a1a3a;letter-spacing:-0.35px">Hoeven</div>
<div class="a" style="left:885px;top:388.2px;width:24px;height:19px;border:1.5px solid #111;background-color:#9a9a9a;background-image:repeating-conic-gradient(#666 0 25%,transparent 0 50%);background-size:6.6px 6.6px"></div>
<div class="t" style="left:911px;top:394.2px;font-size:7.3px;color:#1a1a3a;letter-spacing:-0.35px">Ogen</div>
<div class="a" style="left:885px;top:409.7px;width:24px;height:19px;border:1.5px solid #111;background-color:#9a9a9a;background-image:repeating-conic-gradient(#666 0 25%,transparent 0 50%);background-size:6.6px 6.6px"></div>
<div class="t" style="left:911px;top:415.7px;font-size:7.3px;color:#1a1a3a;letter-spacing:-0.35px">Basis</div>
<div class="a" style="left:885px;top:431.1px;width:24px;height:19px;border:1.5px solid #111;background-color:#9a9a9a;background-image:repeating-conic-gradient(#666 0 25%,transparent 0 50%);background-size:6.6px 6.6px"></div>
<div class="t" style="left:911px;top:437.1px;font-size:7.3px;color:#1a1a3a;letter-spacing:-0.35px">Achtergrond</div>
<div class="a" style="left:885px;top:452.6px;width:24px;height:19px;border:1.5px solid #111;background:linear-gradient(#f0b8c8,#e890a8 60%,#d02848 75%,#b01830)"></div>
<svg style="left:887px;top:454.6px" width="20" height="15" viewBox="0 0 20 15"><path d="M9 14 L10 8 L9 5 L11 2 L13 3 L12 6 L14 8 L12 9 L12 14 Z" fill="#222"/></svg>
<div class="t" style="left:911px;top:458.6px;font-size:7.3px;color:#1a1a3a;letter-spacing:-0.35px">Black Star.JPG</div>
<svg style="left:886.5px;top:410.5px" width="21" height="16" viewBox="0 0 21 16"><path transform="scale(0.0394) translate(-149,-109)" d="M415 152 L417.8 157 L418 164 L425 163.3 L430 156.7 L435.8 153 L435 161.7 L433.3 165.8 L445 175 L453.3 185 L461.7 195 L467.5 201.7 L467.5 208.3 L463.3 216.7 L455 220 L445 215 L433.3 211.7 L431.7 220 L431.7 233.3 L433.7 237 L437.3 240 L448.3 245 L457.5 252 L464.8 248.3 L475.8 249.3 L490.5 257.5 L507 264.8 L519.8 269.4 L526.3 275.8 L523.5 279.5 L510.7 280.4 L505.2 277.7 L503.3 274 L501.5 285 L499.7 303.3 L496 314.3 L490.5 320.8 L485 307 L490.5 292.3 L490.5 277.7 L485 272.2 L472.2 266.7 L464.8 266.7 L459.3 279.5 L455.7 294.2 L448.3 303.3 L441 316.2 L430 330.8 L421.8 340 L409.3 350 L409.3 363.3 L402.7 387.3 L398.7 396.7 L400 406 L408 416.7 L420 427.3 L432.7 444 L437 450.5 L421.8 450.5 L424 444 L415 436 L400 425 L390 418 L383 411 L382 398 L376 407 L376 420 L380 430 L386 440 L400.2 454.8 L407.8 460.3 L406.7 465.7 L391.5 463.5 L389.3 454.8 L364 430 L357.3 416.7 L360 400.7 L358.7 390 L349.3 380.7 L345.3 387.3 L348 410 L346.7 430 L341.7 437.5 L333 441.8 L327.6 439.7 L329.8 426.7 L335.2 405 L337.3 383.3 L339.5 363.8 L340.6 360 L341.7 344.8 L348.2 329.7 L363.3 312.3 L378.5 297.2 L385 284.2 L381.8 273.3 L378.5 249.5 L375.8 245 L375.8 220 L376.7 203.3 L385 189 L390 178 L398 170 L407 168 L409.5 158 Z" fill="#a06e3e"/></svg>
<svg style="left:885px;top:302.5px" width="24" height="19" viewBox="0 0 24 19"><path d="M13 4 L12 9 L11 14" stroke="#a06e3e" stroke-width="1" fill="none"/></svg>
<svg style="left:885px;top:324px" width="24" height="19" viewBox="0 0 24 19"><path d="M13 4 L12 9 L11 14" stroke="#5a4030" stroke-width="1" fill="none"/></svg>
<svg style="left:839px;top:286.5px" width="12" height="8" viewBox="0 0 12 8"><path d="M0.5 4 C3 0.5 9 0.5 11.5 4 C9 7.5 3 7.5 0.5 4 Z" fill="#fff" stroke="#4a5a7a" stroke-width="0.9"/><circle cx="6" cy="4" r="2" fill="#2a3a6a"/></svg>
<svg style="left:839px;top:415.2px" width="12" height="8" viewBox="0 0 12 8"><path d="M0.5 4 C3 0.5 9 0.5 11.5 4 C9 7.5 3 7.5 0.5 4 Z" fill="#fff" stroke="#4a5a7a" stroke-width="0.9"/><circle cx="6" cy="4" r="2" fill="#2a3a6a"/></svg>
<svg style="left:836.3px;top:565.5px" width="11" height="11" viewBox="0 0 16 16"><path d="M3 1 H9 L12 4 V15 H3 Z" fill="#fff" stroke="#888" stroke-width="0.8"/></svg>
<svg style="left:853.8px;top:565.5px" width="11" height="11" viewBox="0 0 16 16"><path d="M1 4 H6 L7 5 H15 V14 H1 Z" fill="#c8c8a0" stroke="#888" stroke-width="0.8"/></svg>
<svg style="left:871.3px;top:565.5px" width="11" height="11" viewBox="0 0 16 16"><path d="M8 2 L13 8 H10 V14 H6 V8 H3 Z" fill="#5ab04a" stroke="#3a803a" stroke-width="0.6"/></svg>
<svg style="left:888.8px;top:565.5px" width="11" height="11" viewBox="0 0 16 16"><path d="M8 14 L13 8 H10 V2 H6 V8 H3 Z" fill="#40c040" stroke="#2a902a" stroke-width="0.6"/></svg>
<svg style="left:906.3px;top:565.5px" width="11" height="11" viewBox="0 0 16 16"><rect x="2" y="2" width="9" height="9" fill="#5a7ac8"/><rect x="5" y="5" width="9" height="9" fill="#3a5aa8" stroke="#888" stroke-width="0.6"/></svg>
<svg style="left:923.8px;top:565.5px" width="11" height="11" viewBox="0 0 16 16"><path d="M8 3 V14 M4 10 C4 14 12 14 12 10" fill="none" stroke="#777" stroke-width="1.5"/><circle cx="8" cy="3" r="1.8" fill="none" stroke="#777" stroke-width="1.2"/></svg>
<svg style="left:941.3px;top:565.5px" width="11" height="11" viewBox="0 0 16 16"><path d="M4 4 H12 L11 15 H5 Z" fill="#999" stroke="#555" stroke-width="0.8"/><rect x="3" y="2" width="10" height="2" fill="#777"/></svg>
<div class="a" style="left:0;top:580px;width:960px;height:20px;background:linear-gradient(90deg,#4a2422 0%,#562a26 5%,#4a2220 12%,#3c1c1e 22%,#351a1c 30%,#42201f 40%,#4e2826 48%,#3e1e20 56%,#331a1c 65%,#402022 75%,#351a1c 85%,#3e1e20 100%);border-top:1px solid #6a4a4a"></div>
<div class="a" style="left:0;top:581px;width:960px;height:9px;background:linear-gradient(rgba(255,255,255,0.05),rgba(255,255,255,0.01))"></div>
<div class="a" style="left:5px;top:577px;width:25px;height:24px;border-radius:50%;background:radial-gradient(circle at 50% 35%,#9ad4f0 0,#3a8ac8 45%,#1a4a8a 80%,#0a2a5a 100%);border:1px solid #1a2a4a"></div>
<svg style="left:9.5px;top:581px" width="16" height="16" viewBox="0 0 16 16"><path d="M2 4 C4 3 6 3 7.5 4 L7 8 C5.5 7 3.5 7 1.5 8 Z" fill="#f06030"/><path d="M8.5 4 C10 5 12 5 14.5 4 L14 8 C12 9 10 9 8 8 Z" fill="#7ac040"/><path d="M1.3 9 C3.5 8 5.5 8 7 9 L6.5 13 C5 12 3 12 1 13 Z" fill="#3aa0e8"/><path d="M7.8 9 C9.5 10 11.5 10 14 9 L13.5 13 C11.5 14 9.5 14 7.4 13 Z" fill="#f0c030"/></svg>
<svg style="left:48.5px;top:585px" width="11" height="11" viewBox="0 0 13 12"><path d="M0.5 2 H5 L6 3 H12.5 V11.5 H0.5 Z" fill="#f0d080" stroke="#c0a050" stroke-width="0.6"/><rect x="3" y="6" width="7" height="5" fill="#4aa0e0"/><rect x="5" y="8" width="3" height="3" fill="#f0d080"/></svg>
<div class="a" style="left:71px;top:581px;width:105px;height:19px;border:1px solid #826a6a;border-radius:2px;background:linear-gradient(#7a5858,#5a3c3c)"></div>
<svg style="left:77px;top:584px" width="11" height="11" viewBox="0 0 11 11"><circle cx="5.5" cy="5.5" r="5" fill="#e04a3a"/><path d="M5.5 5.5 L10.3 4 A5 5 0 0 1 3 9.8 Z" fill="#f0c030"/><path d="M5.5 5.5 L3 9.8 A5 5 0 0 1 0.6 4.5 Z" fill="#3aa04a"/><circle cx="5.5" cy="5.5" r="2.3" fill="#fff"/><circle cx="5.5" cy="5.5" r="1.7" fill="#4a80e0"/></svg>
<div class="t" style="left:90px;top:586px;font-size:8px;color:#f0eaea;letter-spacing:-0.15px">[UK] Uit de Kunst • B...</div>
<div class="a" style="left:187px;top:584px;width:11px;height:11px;background:#2a5ab0;border-radius:1px"></div><div class="t" style="left:188px;top:586px;font-size:7px;color:#fff;font-weight:bold">W</div>
<div class="a" style="left:218px;top:584px;width:12px;height:11px;background:#d0482a;border-radius:1px"></div><div class="t" style="left:220px;top:586px;font-size:7px;color:#fff;font-weight:bold">P</div>
<div class="a" style="left:249px;top:584px;width:9px;height:12px;background:#a8d4f4;border:1px solid #4a8ac8"></div>
<div class="a" style="left:271px;top:581px;width:105px;height:19px;border:1px solid #b0a0a0;border-radius:2px;background:linear-gradient(#d0c4c4,#b8a8a8 50%,#9a8484)"></div>
<svg style="left:281px;top:585px" width="7" height="10" viewBox="0 0 7 10"><path d="M1 9 L5 1 M2 5 L6 4" stroke="#a06a2a" stroke-width="1.2"/></svg>
<div class="t" style="left:290px;top:586px;font-size:8px;color:#fafafa;letter-spacing:-0.2px">*GAChampagne.xcf-...</div>
<div class="a" style="left:387px;top:584px;width:10px;height:12px;background:linear-gradient(#3aa0c0,#2a6a8a);border:1px solid #9ac0d0"></div>
<svg style="left:416px;top:584px" width="14" height="12" viewBox="0 0 14 12"><circle cx="8" cy="6.5" r="4" fill="#f08020"/><circle cx="8" cy="6.5" r="2" fill="#fff"/><circle cx="8" cy="6.5" r="1" fill="#2a5ab0"/><path d="M1 4 L6 3" stroke="#f08020" stroke-width="1.5"/></svg>
<div class="a" style="left:448px;top:584px;width:12px;height:12px;border-radius:50%;background:radial-gradient(circle at 40% 40%,#8ad04a,#3a8a2a)"></div>
<div class="a" style="left:453px;top:586px;width:2px;height:8px;background:#fff"></div>
<svg style="left:795px;top:588px" width="6" height="4"><path d="M0 4 L3 0.5 L6 4 Z" fill="#fff"/></svg>
<svg style="left:809px;top:585px" width="10" height="10" viewBox="0 0 10 10"><path d="M1 0.5 V10 M1 1 H8 L6.5 3 L8 5 H1" fill="#f0f0f0" stroke="#f0f0f0" stroke-width="1"/></svg>
<svg style="left:826px;top:584px" width="11" height="11" viewBox="0 0 11 11"><path d="M1 2 H4 M7 2 H10 M1 9 H4 M2 2 V9 M9 2 V6" stroke="#eee" stroke-width="1.3"/><rect x="6" y="6" width="4" height="4" fill="#f0c030"/></svg>
<div class="a" style="left:840px;top:584px;width:12px;height:12px;border-radius:50%;background:#f0901a"></div>
<div class="a" style="left:843px;top:587px;width:6px;height:6px;border-radius:50%;border:1.5px solid #fff"></div>
<svg style="left:857px;top:584px" width="10" height="11" viewBox="0 0 10 11"><path d="M1 1 H9 V8 H1 Z M3 8 V10.5 M7 8 V10.5" fill="none" stroke="#eee" stroke-width="1.2"/></svg>
<svg style="left:873px;top:584px" width="10" height="11" viewBox="0 0 10 11"><path d="M2 1 V10 M2 3 H9 V8 H3 M5 9.5 H9" fill="none" stroke="#eee" stroke-width="1.2"/></svg>
<svg style="left:890px;top:585px" width="10" height="10" viewBox="0 0 10 10"><path d="M1 3.5 H3 L6 1 V9 L3 6.5 H1 Z" fill="#ddd"/><path d="M7.5 3 C9 4.5 9 5.5 7.5 7" fill="none" stroke="#ccc" stroke-width="0.8"/></svg>
<div class="t" style="left:918px;top:586px;font-size:8.5px;color:#fff;letter-spacing:-0.2px">10:20</div>
<div class="a" style="left:951px;top:581px;width:9px;height:19px;border-left:1px solid #6a5050;background:linear-gradient(90deg,#4a3434,#3a2626)"></div>
</body></html>
